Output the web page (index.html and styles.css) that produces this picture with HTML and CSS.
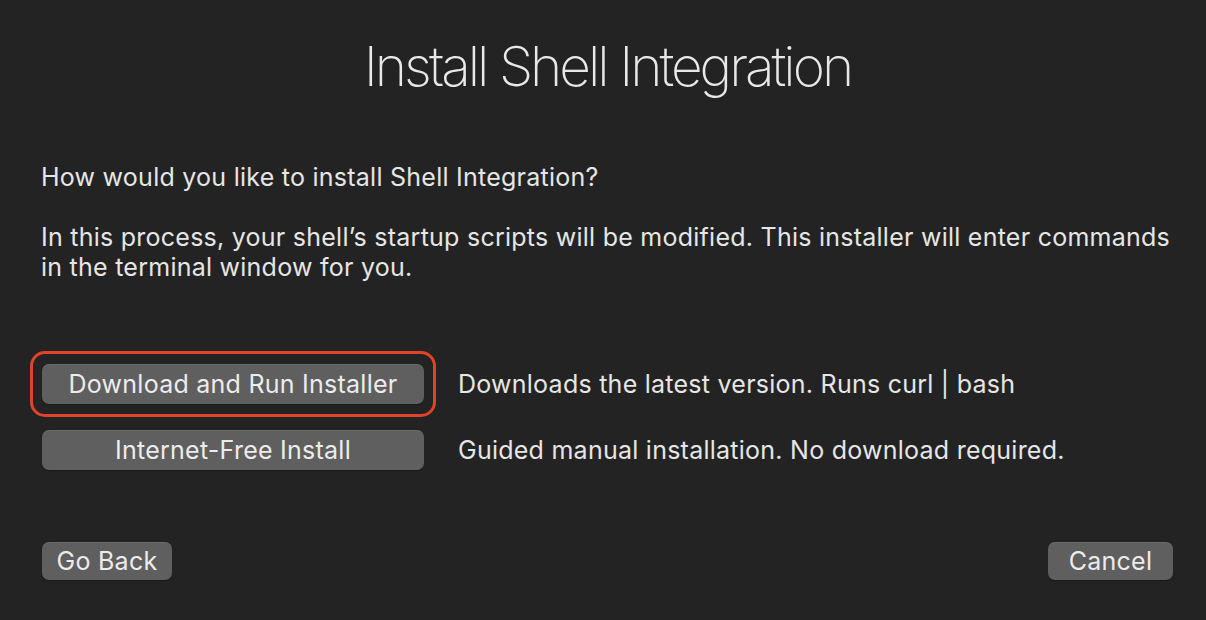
FILE: index.html
```html
<!DOCTYPE html>
<html>
<head>
<meta charset="utf-8">
<link rel="stylesheet" href="styles.css">
</head>
<body>
<div class="dialog">
  <h1 class="title">Install Shell Integration</h1>
  <p class="text q">How would you like to install Shell Integration?</p>
  <p class="text info">In this process, your shell’s startup scripts will be modified. This installer will enter commands in the terminal window for you.</p>
  <div class="options">
    <div class="option">
      <div class="ring focus"><button class="btn wide">Download and Run Installer</button></div>
      <span class="desc">Downloads the latest version. Runs curl | bash</span>
    </div>
    <div class="option">
      <div class="ring"><button class="btn wide">Internet-Free Install</button></div>
      <span class="desc">Guided manual installation. No download required.</span>
    </div>
  </div>
  <div class="footer">
    <button class="btn small back">Go Back</button>
    <button class="btn small cancel">Cancel</button>
  </div>
</div>
</body>
</html>
```
FILE: styles.css
```css
html, body {
  margin: 0;
  padding: 0;
  background: #232323;
  width: 1206px;
  height: 620px;
  overflow: hidden;
}
.dialog {
  box-sizing: border-box;
  height: 620px;
  padding: 0 20px 0 41px;
  display: flex;
  flex-direction: column;
  font-family: Inter, "Liberation Sans", sans-serif;
  color: #e6e6e6;
}
.title {
  margin: 30px 0 0 -12px;
  text-align: center;
  font-weight: 200;
  font-size: 55px;
  line-height: 72px;
  color: #e8e8e8;
  letter-spacing: -3px;
}
.text {
  margin: 0;
  font-size: 25px;
  line-height: 30px;
  letter-spacing: 0.25px;
}
.q { margin-top: 60px; }
.info { margin-top: 30px; }
.options {
  margin-top: 82px;
  display: flex;
  flex-direction: column;
}
.option {
  display: flex;
  align-items: center;
  gap: 22px;
}
.ring {
  margin: -13px 0 -13px -11px;
  padding: 10px 9px;
  border: 3px solid transparent;
  border-radius: 15px;
}
.focus { border-color: #e0432a; }
.option + .option { margin-top: 26px; }
.btn {
  display: block;
  border: none;
  background: #5f5f5f;
  color: #ececec;
  font-family: Inter, "Liberation Sans", sans-serif;
  letter-spacing: 0.25px;
  border-radius: 7px;
  padding: 0;
  box-shadow: inset 0 1px 0 rgba(255,255,255,0.08), 0 1px 1px rgba(0,0,0,0.3);
}
.wide {
  width: 382px;
  height: 40px;
  font-size: 25px;
}
.desc {
  font-size: 25px;
  letter-spacing: 0.25px;
}
.footer {
  margin-top: auto;
  margin-bottom: 40px;
  display: flex;
  justify-content: space-between;
  padding-left: 1px;
  padding-right: 13px;
}
.small {
  height: 38px;
  font-size: 25px;
}
.back { width: 130px; }
.cancel { width: 125px; }
```
